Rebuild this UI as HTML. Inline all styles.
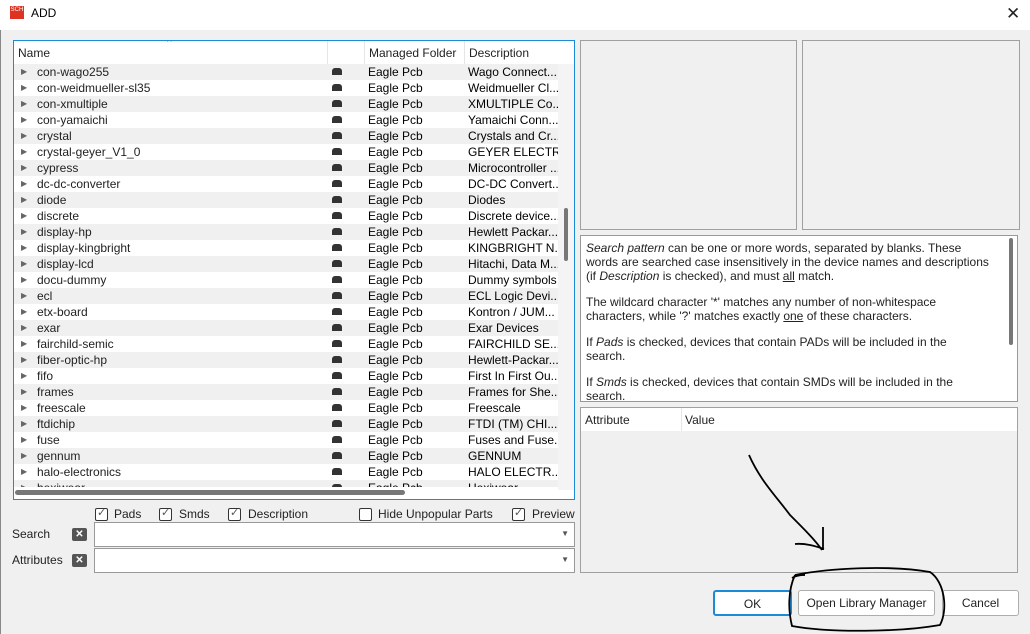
<!DOCTYPE html>
<html><head><style>
*{box-sizing:border-box;margin:0;padding:0}
body{width:1030px;height:634px;background:#f0f0f0;font-family:"Liberation Sans",sans-serif;font-size:12px;color:#000;position:relative;overflow:hidden}
.abs{position:absolute}
.title{left:0;top:0;width:1030px;height:30px;background:#fff}
.list{left:13px;top:40px;width:562px;height:460px;border:1px solid #1b8ad8;background:#fff;overflow:hidden}
.hdr{position:absolute;left:0;top:0;height:23px;width:544px;background:#fff}
.hdr div{position:absolute;top:0;height:23px;line-height:24px;padding-left:4px;border-right:1px solid #e5e5e5;color:#222}
.row{position:absolute;left:0;width:544px;height:16px;line-height:16px;white-space:nowrap;overflow:hidden}
.row span{position:absolute;top:0}
.row .ar{left:7px;font-size:8px;color:#666}
.row .nm{left:23px;color:#222}
.row .ic{left:318px;top:4px;width:10px;height:7px;background:#333;border-radius:3px 3px 0 0}
.row .mf{left:354px}
.row .ds{left:454px;width:90px;overflow:hidden}
.box{background:#f0f0f0;border:1px solid #a0a0a0}
.cb{position:absolute;top:508px;width:13px;height:13px;border:1px solid #333;border-radius:2px;background:#fff}
.cbl{position:absolute;top:507px;color:#222}
.btn{position:absolute;top:590px;height:26px;border:1px solid #adadad;border-radius:3px;background:#fff;text-align:center;line-height:25px;color:#222}
.help p{white-space:nowrap}
</style></head><body>
<div class="abs title"></div>
<div class="abs" style="left:10px;top:6px;width:14px;height:13px;background:#d32;color:#fff;font-size:6px;line-height:9px;text-align:center">SCH</div>
<div class="abs" style="left:31px;top:6px;font-size:12px">ADD</div>
<div class="abs" style="left:1006px;top:4px;font-size:17px;color:#222">✕</div>
<div class="abs" style="left:0;top:30px;width:1px;height:604px;background:#888"></div>

<div class="abs list">
 <div class="hdr">
  <div style="left:0;width:314px">Name</div>
  <div style="left:314px;width:37px"></div>
  <div style="left:351px;width:100px">Managed Folder</div>
  <div style="left:451px;width:93px;border:none">Description</div>
  <span style="position:absolute;left:153px;top:-4px;font-size:10px;color:#555">^</span>
 </div>
 <div id="rows"></div>
 <div class="abs" style="left:544px;top:23px;width:16px;height:426px;background:#f4f4f4"></div>
 <div class="abs" style="left:550px;top:167px;width:4px;height:53px;background:#777;border-radius:2px"></div>
 <div class="abs" style="left:0;top:446px;width:544px;height:14px;background:#fff"></div>
 <div class="abs" style="left:1px;top:449px;width:390px;height:5px;background:#777;border-radius:3px"></div>
</div>

<div class="cb" style="left:95px"></div><span class="abs" style="left:97px;top:506px;font-size:11px;color:#555">✓</span><div class="cbl" style="left:114px">Pads</div>
<div class="cb" style="left:159px"></div><span class="abs" style="left:161px;top:506px;font-size:11px;color:#555">✓</span><div class="cbl" style="left:179px">Smds</div>
<div class="cb" style="left:228px"></div><span class="abs" style="left:230px;top:506px;font-size:11px;color:#555">✓</span><div class="cbl" style="left:248px">Description</div>
<div class="cb" style="left:359px"></div><div class="cbl" style="left:378px">Hide Unpopular Parts</div>
<div class="cb" style="left:512px"></div><span class="abs" style="left:514px;top:506px;font-size:11px;color:#555">✓</span><div class="cbl" style="left:532px">Preview</div>

<div class="abs" style="left:12px;top:527px;color:#222">Search</div>
<div class="abs" style="left:72px;top:528px;width:15px;height:13px;background:#555;border-radius:2px;color:#fff;font-size:10px;line-height:13px;text-align:center;font-weight:bold">✕</div>
<div class="abs" style="left:94px;top:522px;width:481px;height:25px;background:#fff;border:1px solid #999"><span style="position:absolute;right:5px;top:6px;font-size:8px;color:#555">▼</span></div>
<div class="abs" style="left:12px;top:553px;color:#222">Attributes</div>
<div class="abs" style="left:72px;top:554px;width:15px;height:13px;background:#555;border-radius:2px;color:#fff;font-size:10px;line-height:13px;text-align:center;font-weight:bold">✕</div>
<div class="abs" style="left:94px;top:548px;width:481px;height:25px;background:#fff;border:1px solid #999"><span style="position:absolute;right:5px;top:6px;font-size:8px;color:#555">▼</span></div>

<div class="abs box" style="left:580px;top:40px;width:217px;height:190px"></div>
<div class="abs box" style="left:802px;top:40px;width:218px;height:190px"></div>
<div class="abs help" style="left:580px;top:235px;width:438px;height:167px;background:#fff;border:1px solid #999;overflow:hidden;padding:5px 20px 0 5px;font-size:12px;line-height:14px;color:#222">
 <p><i>Search pattern</i> can be one or more words, separated by blanks. These<br>words are searched case insensitively in the device names and descriptions<br>(if <i>Description</i> is checked), and must <u>all</u> match.</p>
 <p style="margin-top:12px">The wildcard character '*' matches any number of non-whitespace<br>characters, while '?' matches exactly <u>one</u> of these characters.</p>
 <p style="margin-top:12px">If <i>Pads</i> is checked, devices that contain PADs will be included in the<br>search.</p>
 <p style="margin-top:12px">If <i>Smds</i> is checked, devices that contain SMDs will be included in the<br>search.</p>
 <div class="abs" style="right:4px;top:2px;width:4px;height:107px;background:#777;border-radius:2px"></div>
</div>
<div class="abs box" style="left:580px;top:407px;width:438px;height:166px">
 <div class="abs" style="left:0;top:0;width:436px;height:23px;background:#fff"></div>
 <div class="abs" style="left:100px;top:0;width:1px;height:23px;background:#e5e5e5"></div>
 <div class="abs" style="left:4px;top:5px;color:#222">Attribute</div>
 <div class="abs" style="left:104px;top:5px;color:#222">Value</div>
</div>

<div class="btn" style="left:713px;width:79px;border:2px solid #1b8ad8">OK</div>
<div class="btn" style="left:798px;width:137px">Open Library Manager</div>
<div class="btn" style="left:942px;width:77px">Cancel</div>

<svg class="abs" style="left:0;top:0" width="1030" height="634">
 <path d="M749 455 C760 480,775 495,790 515 C805 530,815 540,822 550 M795 544 C805 543,815 546,824 549 M823 527 C823 535,823 542,823 550" fill="none" stroke="#000" stroke-width="1.8"/>
 <path d="M795 575 C830 568,890 565,930 572 C945 582,948 610,940 625 C900 632,830 633,792 626 C788 610,788 590,795 575 M792 578 C795 576,800 575,805 575" fill="none" stroke="#000" stroke-width="1.8"/>
</svg>

<script>
var d=[["con-wago255","Wago Connect..."],["con-weidmueller-sl35","Weidmueller Cl..."],["con-xmultiple","XMULTIPLE Co..."],["con-yamaichi","Yamaichi Conn..."],["crystal","Crystals and Cr..."],["crystal-geyer_V1_0","GEYER ELECTR..."],["cypress","Microcontroller ..."],["dc-dc-converter","DC-DC Convert..."],["diode","Diodes"],["discrete","Discrete device..."],["display-hp","Hewlett Packar..."],["display-kingbright","KINGBRIGHT N..."],["display-lcd","Hitachi, Data M..."],["docu-dummy","Dummy symbols"],["ecl","ECL Logic Devi..."],["etx-board","Kontron / JUM..."],["exar","Exar Devices"],["fairchild-semic","FAIRCHILD SE..."],["fiber-optic-hp","Hewlett-Packar..."],["fifo","First In First Ou..."],["frames","Frames for She..."],["freescale","Freescale"],["ftdichip","FTDI (TM) CHI..."],["fuse","Fuses and Fuse..."],["gennum","GENNUM"],["halo-electronics","HALO ELECTR..."],["hexiwear","Hexiwear"]];
var h="";for(var i=0;i<d.length;i++){h+='<div class="row" style="top:'+(23+i*16)+'px;background:'+(i%2?'#fff':'#f0f0f0')+'"><span class="ar">&#9654;</span><span class="nm">'+d[i][0]+'</span><span class="ic"></span><span class="mf">Eagle Pcb</span><span class="ds">'+d[i][1]+'</span></div>';}
document.getElementById("rows").innerHTML=h;
</script>
</body></html>
